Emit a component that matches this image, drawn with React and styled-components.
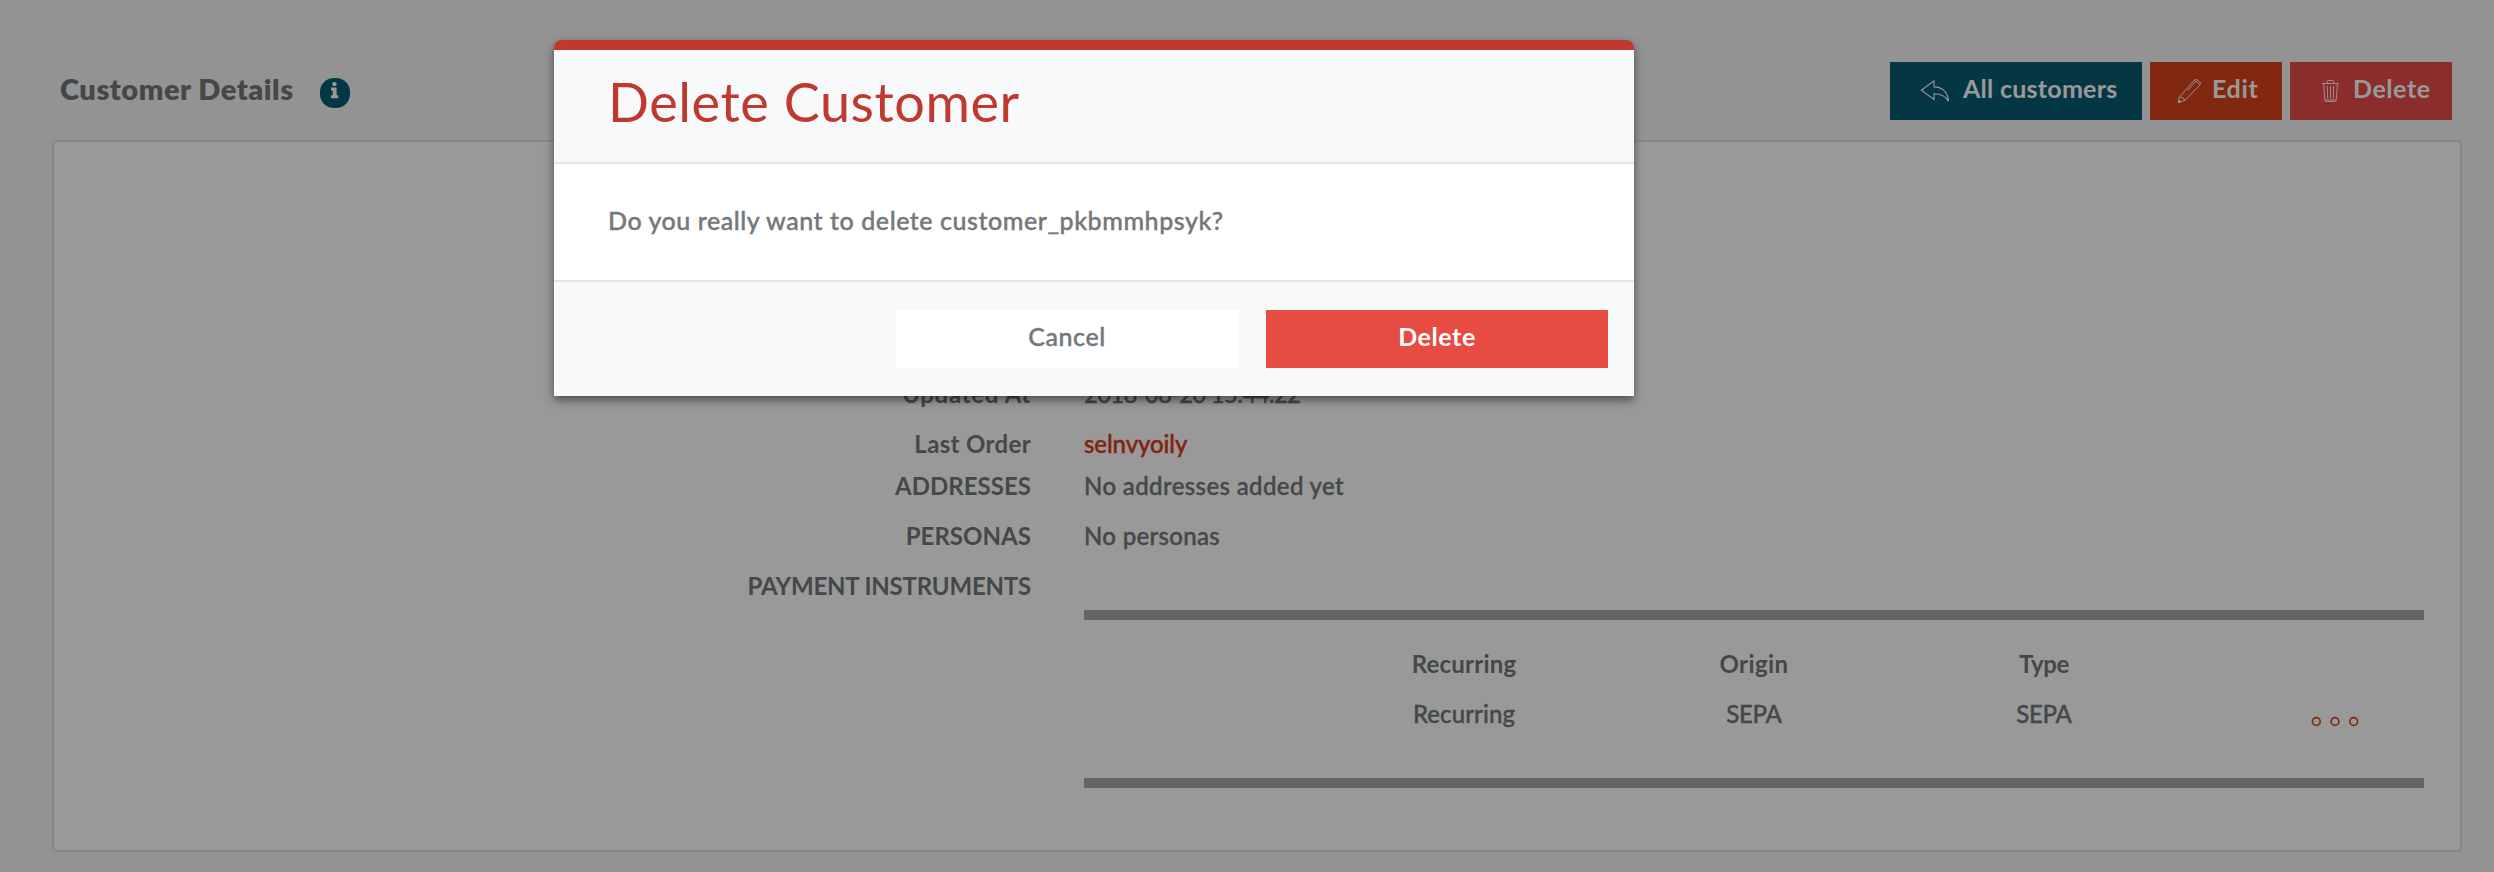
import React from "react";
import styled, { createGlobalStyle } from "styled-components";

const GlobalStyle = createGlobalStyle`
  * { box-sizing: border-box; }
  body {
    margin: 0;
    background: #f5f5f5;
    color: #73787b;
    font-family: Lato, "Liberation Sans", sans-serif;
    font-size: 24px;
    font-weight: 500;
  }
`;

const Page = styled.div`
  position: relative;
  width: 2494px;
  height: 872px;
  overflow: hidden;
`;

const PageHeader = styled.header`
  display: flex;
  justify-content: space-between;
  height: 140px;
  padding: 62px 42px 0 60px;
`;

const Heading = styled.div`
  display: flex;
  align-items: flex-start;
`;

const Title = styled.h1`
  width: 260px;
  margin: 0;
  font-size: 29px;
  font-weight: 800;
  line-height: 54px;
  letter-spacing: 0.52px;
  white-space: nowrap;
`;

const InfoBadge = styled.span`
  width: 30px;
  height: 30px;
  margin-top: 16px;
  border-radius: 14px;
  background: #075a70;

  svg { display: block; }
`;

const Toolbar = styled.div`
  display: flex;
  gap: 8px;
`;

const tones = {
  teal: { background: "#075a70", color: "#fff" },
  orange: { background: "#da441b", color: "#fff" },
  red: { background: "#e74c48", color: "#fff" },
  danger: { background: "#e64c42", color: "#fff" },
  plain: { background: "#fff", color: "#73787b" },
};

const Button = styled.button`
  display: flex;
  align-items: center;
  justify-content: ${(p) => (p.$inset ? "flex-start" : "center")};
  gap: ${(p) => p.$gap || 0}px;
  width: ${(p) => p.$width}px;
  height: 58px;
  padding: 0 0 0 ${(p) => p.$inset || 0}px;
  border: 0;
  background: ${(p) => tones[p.$tone].background};
  color: ${(p) => tones[p.$tone].color};
  font: inherit;
  font-size: 25px;
  font-weight: ${(p) => (p.$tone === "plain" ? 500 : 700)};
  letter-spacing: ${(p) => p.$track}px;
  white-space: nowrap;
  -webkit-text-stroke: ${(p) => (p.$tone === "plain" ? 0.4 : 0)}px;

  svg { flex: none; }
`;

const ButtonLabel = styled.span`
  line-height: 30px;
  padding-bottom: 6px;
`;

const Panel = styled.main`
  width: 2410px;
  height: 712px;
  margin-left: 52px;
  padding: 227px 36px 0 0;
  border: 2px solid #e3e3e3;
  border-radius: 4px;
  background: #fff;
`;

const Field = styled.div`
  display: grid;
  grid-template-columns: 977px 1340px;
  column-gap: 53px;
  line-height: 50px;
  margin-bottom: ${(p) => (p.$tight ? -8 : 0)}px;
`;

const FieldLabel = styled.div`
  font-weight: 700;
  text-align: right;
  letter-spacing: ${(p) => p.$track}px;
`;

const FieldValue = styled.div`
  letter-spacing: ${(p) => p.$track || 0}px;
  color: ${(p) => (p.$link ? "#da3a1b" : "inherit")};
  -webkit-text-stroke: 0.4px;
`;

const Instruments = styled.div`
  height: 178px;
  margin-top: 49px;
  padding-top: 19px;
  border-top: 10px solid #a3a7a9;
  border-bottom: 10px solid #a3a7a9;
`;

const InstrumentRow = styled.div`
  display: grid;
  grid-template-columns: 235px 290px 290px 290px 235px;
  height: 50px;
  text-align: center;
  font-weight: ${(p) => (p.$head ? 700 : 500)};
  -webkit-text-stroke: ${(p) => (p.$head ? 0 : 0.4)}px;
`;

const Cell = styled.span`
  letter-spacing: ${(p) => p.$track}px;
`;

const MoreButton = styled.span`
  padding: 27px 0 0 121px;

  svg { display: block; }
`;

const Overlay = styled.div`
  position: absolute;
  inset: 0;
  background: rgba(0, 0, 0, 0.4);
`;

const Dialog = styled.section`
  position: absolute;
  top: 40px;
  left: 554px;
  width: 1080px;
  height: 356px;
  border-top: 10px solid #c0392f;
  border-radius: 8px 8px 0 0;
  background: #fff;
  box-shadow: 0 4px 10px rgba(0, 0, 0, 0.5);
`;

const DialogHeader = styled.header`
  height: 114px;
  padding-left: 54px;
  border-bottom: 2px solid #e3e6e7;
  background: #f8f9fb;
`;

const DialogTitle = styled.h2`
  margin: 0;
  color: #c0392f;
  font-size: 54px;
  font-weight: 400;
  line-height: 104px;
  letter-spacing: 0.56px;
`;

const DialogBody = styled.div`
  height: 116px;
  padding-left: 54px;
  font-size: 25px;
  line-height: 113px;
  letter-spacing: 0.55px;
  -webkit-text-stroke: 0.4px;
`;

const DialogFooter = styled.footer`
  display: flex;
  justify-content: flex-end;
  gap: 28px;
  height: 116px;
  padding: 28px 26px 0 0;
  border-top: 2px solid #e3e6e7;
  background: #f8f9fb;
`;

const BackIcon = () => (
  <svg width="30" height="30" viewBox="20 10 30 30" fill="none" stroke="currentColor" strokeWidth="1.1">
    <path d="M21.4 24.3 34 14.9v6c8 0 14 5 14.5 14.2-3.300-5.400-7.500-7.300-14.500-7.300v5.600Z" />
  </svg>
);

const PencilIcon = () => (
  <svg width="24" height="30" viewBox="12 10 24 30" fill="none" stroke="currentColor" strokeWidth="0.9" strokeLinejoin="round">
    <path d="M12.500 36.500 13 31.700 27.800 14.600q1.700-1.800 3.200-.8l2.800 2q1.500 1.200.2 3L18.700 34.600Z" />
    <path d="m13.200 31.500q2.300-1 3.300.4 2 .4 2 2.700M12.700 34.500l1.900 1.500M29.600 15.300 22 24.200M28.300 14.300l5.700 4.200" />
    <path d="m12.500 36.500.2-2 1.800 1.300Z" fill="currentColor" />
  </svg>
);

const TrashIcon = () => (
  <svg width="17" height="30" viewBox="12 10 17 30" fill="none" stroke="currentColor" strokeWidth="0.9">
    <path d="M12.200 17.500h16.500M17.200 17.300v-1.600q0-1.200 1.200-1.200h4.100q1.200 0 1.200 1.200v1.600" />
    <path d="M13.600 18 14.800 34q.2 1.500 1.700 1.500h8q1.500 0 1.700-1.500L27.400 18M17.200 20l.5 12.700M20.500 20v12.700M23.700 20l-.5 12.700M15.200 34h10.800" />
  </svg>
);

const InfoIcon = () => (
  <svg width="30" height="30" viewBox="0 0 30 30" fill="#fff">
    <rect x="12.300" y="4.200" width="4.200" height="3.700" rx="0.800" />
    <path d="M11 9.600h5.600v7.700h1.700v2.900H11v-2.900h1.700v-4.800H11Z" />
  </svg>
);

const MoreIcon = () => (
  <svg width="50" height="12" viewBox="0 0 50 12" fill="none" stroke="#da3f1b" strokeWidth="1.600">
    <circle cx="6.300" cy="5.500" r="3.900" />
    <circle cx="25" cy="5.500" r="3.900" />
    <circle cx="43.700" cy="5.500" r="3.900" />
  </svg>
);

export default function App() {
  return (
    <Page>
      <GlobalStyle />
      <PageHeader>
        <Heading>
          <Title>Customer Details</Title>
          <InfoBadge><InfoIcon /></InfoBadge>
        </Heading>
        <Toolbar>
          <Button $tone="teal" $width={252} $inset={30} $gap={13} $track={0.26}>
            <BackIcon /><ButtonLabel>All customers</ButtonLabel>
          </Button>
          <Button $tone="orange" $width={132} $inset={28} $gap={10} $track={0.68}>
            <PencilIcon /><ButtonLabel>Edit</ButtonLabel>
          </Button>
          <Button $tone="red" $width={162} $inset={32} $gap={14} $track={0.57}>
            <TrashIcon /><ButtonLabel>Delete</ButtonLabel>
          </Button>
        </Toolbar>
      </PageHeader>

      <Panel>
        <Field>
          <FieldLabel $track={0.7}>Updated At</FieldLabel>
          <FieldValue $track={-0.77}>2018-08-20 15:44:22</FieldValue>
        </Field>
        <Field $tight>
          <FieldLabel $track={0.35}>Last Order</FieldLabel>
          <FieldValue $link $track={-0.1}>selnvyoily</FieldValue>
        </Field>
        <Field>
          <FieldLabel $track={0.03}>ADDRESSES</FieldLabel>
          <FieldValue $track={0.38}>No addresses added yet</FieldValue>
        </Field>
        <Field>
          <FieldLabel $track={0.05}>PERSONAS</FieldLabel>
          <FieldValue $track={0.32}>No personas</FieldValue>
        </Field>
        <Field>
          <FieldLabel $track={-0.2}>PAYMENT INSTRUMENTS</FieldLabel>
          <Instruments>
            <InstrumentRow $head>
              <span />
              <Cell $track={0.21}>Recurring</Cell>
              <Cell $track={0.4}>Origin</Cell>
              <Cell $track={-0.39}>Type</Cell>
            </InstrumentRow>
            <InstrumentRow>
              <span />
              <Cell $track={0.1}>Recurring</Cell>
              <Cell $track={-0.3}>SEPA</Cell>
              <Cell $track={-0.3}>SEPA</Cell>
              <MoreButton><MoreIcon /></MoreButton>
            </InstrumentRow>
          </Instruments>
        </Field>
      </Panel>

      <Overlay />
      <Dialog>
        <DialogHeader>
          <DialogTitle>Delete Customer</DialogTitle>
        </DialogHeader>
        <DialogBody>Do you really want to delete customer_pkbmmhpsyk?</DialogBody>
        <DialogFooter>
          <Button $tone="plain" $width={342} $track={0.58}>
            <ButtonLabel>Cancel</ButtonLabel>
          </Button>
          <Button $tone="danger" $width={342} $track={0.57}>
            <ButtonLabel>Delete</ButtonLabel>
          </Button>
        </DialogFooter>
      </Dialog>
    </Page>
  );
}
